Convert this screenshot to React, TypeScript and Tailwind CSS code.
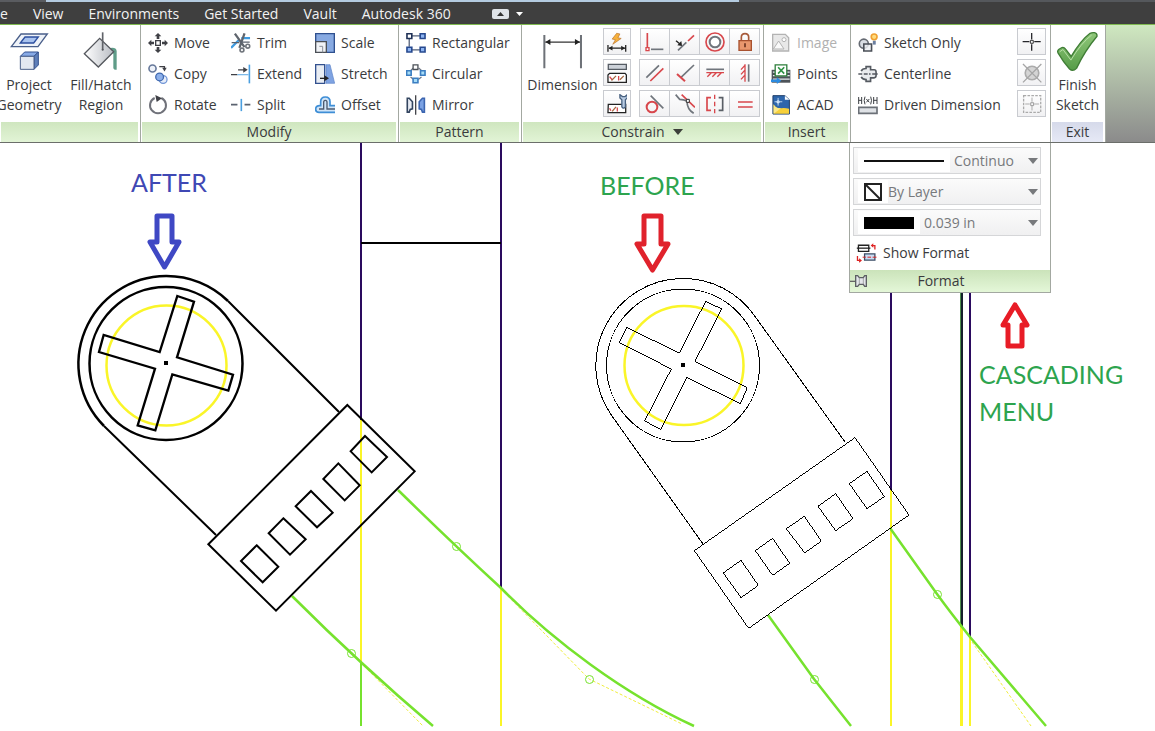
import type { ReactNode } from "react";

/* Icons are drawn on a grid three times finer than the screen. */
function Icon({ box, w = 20, h = 20, children }: { box: string; w?: number; h?: number; children: ReactNode }) {
  return (
    <svg aria-hidden="true" className="shrink-0" width={w} height={h} viewBox={box} fill="none">
      {children}
    </svg>
  );
}

const DARK = "#3f4046";
const BLUE = "#3f9be0";
const NAVY = "#33518f";
const RED = "#d8474c";
const GRAY = "#70757c";

const ProjectIcon = () => (
  <Icon box="24 86 120 120" w={40} h={40}>
    <path d="M31 133L60 95H139L111 133Z" fill="#eef2f8" stroke="#4a5f8a" strokeWidth="4" />
    <path d="M58 122L72 104H112L98 122Z" fill="#a9c3ef" stroke="#2d4f9f" strokeWidth="4" />
    <path d="M58 162L71 149H112L99 162Z" fill="#88aae6" stroke={NAVY} strokeWidth="3" />
    <path d="M99 162L112 149V188L99 201Z" fill="#5f7fb9" stroke={NAVY} strokeWidth="3" />
    <path d="M58 162H99V201H58Z" fill="#e3e8f1" stroke="#4a5f8a" strokeWidth="3" />
  </Icon>
);

const FillIcon = () => (
  <Icon box="244 86 120 120" w={40} h={40}>
    <defs>
      <linearGradient id="bucket" x1="0" x2="1">
        <stop offset="0" stopColor="#ffffff" />
        <stop offset="1" stopColor="#b9bdc4" />
      </linearGradient>
    </defs>
    <path d="M326 138Q349 132 351 146V202Q344 204 341 198V154Q338 146 326 150Z" fill="#5f9c88" />
    <path d="M254 154L300 108L342 148L296 194Z" fill="url(#bucket)" stroke="#55585e" strokeWidth="4" />
    <path d="M309 90V143" stroke="#606369" strokeWidth="5" />
    <circle cx="309" cy="142" r="3" fill="#55585e" />
  </Icon>
);

const MoveIcon = () => (
  <Icon box="444 96 60 60">
    <path d="M467 119H481V133H467Z" stroke={DARK} strokeWidth="4" />
    <path d="M474 96L484 106H478V114H470V106H464ZM474 156L464 146H470V138H478V146H484ZM444 126L454 116V122H462V130H454V136ZM504 126L494 136V130H486V122H494V116Z" fill={DARK} />
  </Icon>
);

const CopyIcon = () => (
  <Icon box="443 188 62 62">
    <circle cx="457" cy="202" r="11" fill="#eef2f9" stroke="#66789a" strokeWidth="5" />
    <circle cx="490" cy="236" r="12" fill="#e6edf9" stroke="#6f94d6" strokeWidth="4" />
    <circle cx="479" cy="228" r="12" fill="#8db0ea" stroke="#3f68ae" strokeWidth="4" />
    <path d="M478 196H494V202" stroke={DARK} strokeWidth="4" />
    <path d="M487 200H501L494 211Z" fill={DARK} />
  </Icon>
);

const RotateIcon = () => (
  <Icon box="442 282 60 60">
    <path d="M462 291A24 24 0 1 0 482 291" stroke="#70727a" strokeWidth="6" />
    <path d="M464 282L484 292L468 303Z" fill={DARK} />
  </Icon>
);

const TrimIcon = () => (
  <Icon box="34 96 62 62">
    <path d="M34 142L60 116M66 112H93" stroke={BLUE} strokeWidth="7" />
    <path d="M46 98L76 140M76 97L60 142" stroke="#5f656d" strokeWidth="7" />
    <path d="M64 124H92M36 126H60" stroke="#59616e" strokeWidth="4" />
    <circle cx="68" cy="149" r="6" stroke={GRAY} strokeWidth="5" />
    <circle cx="86" cy="137" r="6" stroke={GRAY} strokeWidth="5" />
  </Icon>
);

const ExtendIcon = () => (
  <Icon box="34 188 62 62">
    <path d="M34 221H54M56 206H76" stroke={DARK} strokeWidth="4" />
    <path d="M54 221H88" stroke="#7db9e8" strokeWidth="4" />
    <path d="M72 197L86 206L72 215Z" fill={DARK} />
    <path d="M91 190V248" stroke="#4b9fe0" strokeWidth="5" />
  </Icon>
);

const SplitIcon = () => (
  <Icon box="34 282 62 60">
    <path d="M34 311H54M76 311H94" stroke="#5b6370" strokeWidth="5" />
    <path d="M66 293V331" stroke="#4b9fe0" strokeWidth="5" />
  </Icon>
);

const ScaleIcon = () => (
  <Icon box="285 96 60 60">
    <path d="M287 98H343V154H287Z" fill="#88aae2" stroke="#2f508f" strokeWidth="4" />
    <path d="M287 122H319V154H287Z" fill="#f1f3f6" stroke="#4b5057" strokeWidth="4" />
    <path d="M298 136H308V154" stroke="#8a9098" strokeWidth="3" />
  </Icon>
);

const StretchIcon = () => (
  <Icon box="285 189 60 60">
    <path d="M287 191H314V247H287Z" fill="#e9edf3" stroke={NAVY} strokeWidth="4" />
    <path d="M318 191H330L344 247H318Z" fill="#7fa3e2" stroke="#5c83c8" strokeWidth="2" />
    <path d="M300 232H316" stroke="#222" strokeWidth="4" />
    <path d="M313 223L327 232L313 241Z" fill="#222" />
  </Icon>
);

const OffsetIcon = () => (
  <Icon box="286 284 60 56">
    <path d="M346 334H298Q288 334 288 325Q288 314 300 314H303V302Q303 288 317 288Q331 288 331 302V314H346" fill="#cfe4f8" stroke="#3e8ed6" strokeWidth="5" />
    <path d="M346 324H322V304Q322 298 317 298Q312 298 312 304V324H298" stroke="#4d5a6e" strokeWidth="4" />
  </Icon>
);

const RectangularIcon = () => (
  <Icon box="33 95 60 62">
    <path d="M50 104H76M50 147H76M42 112V138" stroke="#55627a" strokeWidth="4" />
    <path d="M35 97H50V112H35Z" fill="#fff" stroke="#1f3157" strokeWidth="5" />
    <path d="M76 97H91V112H76ZM35 139H50V154H35ZM76 139H91V154H76Z" fill="#8db4f2" stroke="#27498f" strokeWidth="5" />
  </Icon>
);

const CircularIcon = () => (
  <Icon box="32 188 62 62">
    <path d="M47 208L55 200M71 200L80 208M46 228L56 236M80 228L70 236" stroke="#6c7686" strokeWidth="4" />
    <path d="M54 191H69V205H54Z" fill="#fff" stroke="#4b5057" strokeWidth="4" />
    <path d="M34 209H48V223H34ZM77 209H91V223H77ZM54 232H69V246H54Z" fill="#a6dcf7" stroke="#3c7ec2" strokeWidth="5" />
  </Icon>
);

const MirrorIcon = () => (
  <Icon box="32 281 60 62">
    <path d="M35 291H41L51 302V324L44 326L41 334H35Z" fill="#e8ecf3" stroke="#33455f" strokeWidth="5" />
    <path d="M88 291H82L72 302V324L79 326L82 334H88Z" fill="#7ba2e4" stroke="#3c65b0" strokeWidth="5" />
    <path d="M61 282V342" stroke={DARK} strokeWidth="4" />
  </Icon>
);

const DimensionIcon = () => (
  <Icon box="442 94 122 104" w={41} h={35}>
    <path d="M449 97V196M558 97V196" stroke="#6e7278" strokeWidth="6" />
    <path d="M452 118H555" stroke="#333" strokeWidth="4" />
    <path d="M452 118L467 109V127ZM555 118L540 109V127Z" fill="#222" />
  </Icon>
);

const AutoDimIcon = () => (
  <Icon box="34 36 62 62">
    <path d="M64 40L50 58L60 60L52 74L78 56L68 54L74 42Z" fill="#f6b13c" stroke="#b8702a" strokeWidth="2" />
    <path d="M37 76V97M92 76V97M40 86H90" stroke="#222" strokeWidth="4" />
    <path d="M39 86L51 79V93ZM90 86L78 79V93Z" fill="#222" />
  </Icon>
);

const ShowConstraintsIcon = () => (
  <Icon box="34 128 62 62">
    <path d="M38 132H94V148H38Z" fill="#cdd2d9" stroke="#555b63" strokeWidth="4" />
    <path d="M42 160H90L94 165V188H37V165Z" fill="#fff" stroke="#222" strokeWidth="4" />
    <path d="M50 180L42 170M70 168V182" stroke={RED} strokeWidth="4" />
    <path d="M48 182L62 168M74 180L86 168" stroke="#a5653f" strokeWidth="4" />
  </Icon>
);

const SettingsIcon = () => (
  <Icon box="34 220 62 62">
    <path d="M38 252H92V278H37Z" fill="#fff" stroke="#222" strokeWidth="4" />
    <path d="M46 272L42 264M66 262V274" stroke={RED} strokeWidth="4" />
    <path d="M50 274L62 260" stroke="#a5653f" strokeWidth="4" />
    <path d="M74 222V232L80 238V260Q85 268 91 260V238L97 232V222L90 228H82Z" fill="#b8cbe2" stroke="#47607f" strokeWidth="4" />
  </Icon>
);

const CoincidentIcon = () => (
  <Icon box="148 34 60 60">
    <path d="M155 37V80" stroke={RED} strokeWidth="5" />
    <path d="M151 81H160V90H151Z" fill="#fff" stroke={RED} strokeWidth="4" />
    <path d="M166 86H203" stroke={GRAY} strokeWidth="5" />
  </Icon>
);

const CollinearIcon = () => (
  <Icon box="236 34 60 60">
    <path d="M245 89L270 65" stroke={GRAY} strokeWidth="5" />
    <path d="M275 61L293 44" stroke={RED} strokeWidth="5" />
    <path d="M239 60L252 71" stroke="#222" strokeWidth="4" />
    <path d="M257 76L243 74L255 61Z" fill="#222" />
  </Icon>
);

const ConcentricIcon = () => (
  <Icon box="327 35 60 60">
    <circle cx="357" cy="65" r="27" stroke={RED} strokeWidth="5" />
    <circle cx="357" cy="65" r="16" fill="#fff" stroke={GRAY} strokeWidth="6" />
  </Icon>
);

const LockIcon = () => (
  <Icon box="415 36 60 60">
    <path d="M434 62V52Q434 41 445 41Q456 41 456 52V62" stroke="#a75a3a" strokeWidth="5" />
    <path d="M427 62H464V91H427Z" fill="#e9976d" stroke="#a8512f" strokeWidth="4" />
    <path d="M445 70V82" stroke="#6b3420" strokeWidth="5" />
  </Icon>
);

const ParallelIcon = () => (
  <Icon box="148 130 60 60">
    <path d="M152 174L190 137" stroke={GRAY} strokeWidth="5" />
    <path d="M164 184L203 146" stroke={RED} strokeWidth="5" />
  </Icon>
);

const PerpendicularIcon = () => (
  <Icon box="236 130 60 60">
    <path d="M254 173L293 136" stroke={GRAY} strokeWidth="5" />
    <path d="M242 163L266 185" stroke={RED} strokeWidth="6" />
  </Icon>
);

const HorizontalIcon = () => (
  <Icon box="327 128 60 60">
    <path d="M331 147H384" stroke={GRAY} strokeWidth="5" />
    <path d="M331 157H384M346 157L334 169M361 157L349 169M376 157L364 169" stroke={RED} strokeWidth="4" />
  </Icon>
);

const VerticalIcon = () => (
  <Icon box="416 130 60 60">
    <path d="M457 134V186" stroke={GRAY} strokeWidth="5" />
    <path d="M446 134V186M445 138L434 150M445 152L434 164M445 167L434 179" stroke={RED} strokeWidth="4" />
  </Icon>
);

const TangentIcon = () => (
  <Icon box="148 220 60 60">
    <circle cx="169" cy="259" r="16" stroke={RED} strokeWidth="6" />
    <path d="M165 225L203 263" stroke={GRAY} strokeWidth="5" />
  </Icon>
);

const SmoothIcon = () => (
  <Icon box="236 222 60 60">
    <path d="M238 224L250 238Q262 238 272 243Q272 268 292 280" stroke={GRAY} strokeWidth="5" />
    <path d="M256 224L296 262" stroke={RED} strokeWidth="5" />
    <path d="M270 238H279V247H270Z" fill="#fff" stroke="#333" strokeWidth="3" />
  </Icon>
);

const SymmetricIcon = () => (
  <Icon box="326 222 60 60">
    <path d="M344 233H332V271H344" stroke={RED} strokeWidth="5" />
    <path d="M367 233H379V271H367" stroke="#5a5f66" strokeWidth="5" />
    <path d="M355 224V237M355 245V259M355 267V280" stroke={RED} strokeWidth="4" />
  </Icon>
);

const EqualIcon = () => (
  <Icon box="416 222 60 60">
    <path d="M425 246H469M425 261H469" stroke={RED} strokeWidth="5" />
  </Icon>
);

const ImageIcon = () => (
  <Icon box="33 34 56 60">
    <path d="M36 38H74L84 48V88H36Z" fill="#e8e8e8" stroke="#b3b3b3" strokeWidth="4" />
    <circle cx="70" cy="54" r="6" fill="#fff" stroke="#b3b3b3" strokeWidth="3" />
    <path d="M38 82L54 58L70 82Z" fill="#fafafa" stroke="#b3b3b3" strokeWidth="3" />
  </Icon>
);

const PointsIcon = () => (
  <Icon box="32 128 62 62">
    <path d="M34 146H92V186H34Z" fill="#4d5359" />
    <path d="M38 153H90M38 164H90M38 175H90" stroke="#e5e9ee" strokeWidth="4" />
    <path d="M45 131H81V165H45Z" fill="#fff" stroke="#2c7d3a" strokeWidth="4" />
    <path d="M54 138L73 158M73 138L54 158" stroke="#2f9344" strokeWidth="5" />
    <path d="M32 176H50V169L64 180L50 190V184H32Z" fill="#2c8be0" />
  </Icon>
);

const AcadIcon = () => (
  <Icon box="32 221 60 62">
    <path d="M37 223H74L88 236V280H37Z" fill="#2e66ac" stroke="#1b3a66" strokeWidth="3" />
    <path d="M39 250Q46 264 62 262Q74 260 87 264V279H39Z" fill="#f7d03a" />
    <path d="M39 279L62 262Q46 264 39 250Z" fill="#fbe88a" />
    <path d="M74 223L88 236H74Z" fill="#fff" />
    <circle cx="53" cy="242" r="5" fill="#fff" />
    <path d="M53 230V254M42 242H66" stroke="#bcd6f2" strokeWidth="3" />
  </Icon>
);

const SketchOnlyIcon = () => (
  <Icon box="293 34 60 62">
    <circle cx="310" cy="67" r="14" fill="#d9dde3" stroke="#666b73" strokeWidth="5" />
    <path d="M310 68H334V90H310Z" fill="#eceff3" fillOpacity=".8" stroke="#4a4f57" strokeWidth="5" />
    <circle cx="342" cy="46" r="9" fill="#ffdb7d" stroke="#f0a030" strokeWidth="5" />
    <path d="M338 58H347V70H338Z" fill="#6b7f9f" />
  </Icon>
);

const CenterlineIcon = () => (
  <Icon box="294 126 60 62">
    <path d="M303 148Q306 140 318 140V134H332V144H343Q349 144 349 151V162Q349 169 343 169H332V180H318V174Q306 174 303 166" fill="#e9ebee" stroke="#555a61" strokeWidth="5" />
    <path d="M294 157H306M311 157H323M327 157H332M337 157H354" stroke="#555a61" strokeWidth="4" />
  </Icon>
);

const DrivenIcon = () => (
  <Icon box="293 221 60 60">
    <path d="M295 227V248M304 227V248M295 237H304M340 227V248M350 227V248M340 237H350" stroke="#3c3f44" strokeWidth="3" />
    <path d="M314 226Q309 237 314 249M331 226Q336 237 331 249M318 233L327 243M327 233L318 243" stroke="#3c3f44" strokeWidth="3" />
    <path d="M295 258H350V276H295Z" fill="#dfe2e6" stroke="#6b7077" strokeWidth="5" />
  </Icon>
);

const CrossPointIcon = () => (
  <Icon box="242 94 60 62">
    <path d="M271 97V117M271 132V152M243 124H264M279 124H299" stroke="#26262b" strokeWidth="4" />
    <path d="M267 120H276V129H267Z" stroke="#333" strokeWidth="3" />
  </Icon>
);

const HoleIcon = () => (
  <Icon box="242 187 60 62">
    <circle cx="272" cy="218" r="21" fill="#d4d4d4" stroke="#ababab" strokeWidth="5" />
    <path d="M244 190L301 247M301 190L244 247" stroke="#a5a5a5" strokeWidth="4" />
  </Icon>
);

const GridPointIcon = () => (
  <Icon box="241 279 60 62">
    <path d="M245 284H298V336H245Z" stroke="#aaa" strokeWidth="4" strokeDasharray="8 4" />
    <path d="M271 290V303M271 316V330M250 310H264M278 310H293" stroke="#aaa" strokeWidth="3" />
    <path d="M267 306H276V315H267Z" stroke="#999" strokeWidth="3" />
  </Icon>
);

const CheckIcon = () => (
  <Icon box="350 90 128 124" w={43} h={41}>
    <defs>
      <linearGradient id="tick" x1="0" y1="0" x2="0" y2="1">
        <stop offset="0" stopColor="#8fc779" />
        <stop offset="1" stopColor="#569c48" />
      </linearGradient>
    </defs>
    <path d="M355 156Q352 150 358 145L367 140Q373 138 378 145L395 167Q424 118 452 97Q458 94 465 95Q474 97 473 106Q436 150 411 203Q400 214 390 205Q370 182 355 156Z" fill="url(#tick)" stroke="#3f7d35" strokeWidth="4" />
    <path d="M360 153L370 146L394 178Q425 126 457 102" stroke="#b7dfa6" strokeWidth="3" />
  </Icon>
);

const ShowFormatIcon = () => (
  <Icon box="34 308 64 62" w={21}>
    <path d="M41 315H73V334H41Z" stroke="#222" strokeWidth="4" />
    <path d="M36 324H78" stroke="#222" strokeWidth="4" />
    <path d="M60 342H92V361H60Z" fill="#c9ddf3" stroke="#3b4c66" strokeWidth="4" />
    <path d="M54 352H64M69 352H80M85 352H97" stroke="#d22" strokeWidth="3" />
    <path d="M92 328V316H86M38 348V362H44" stroke="#d22" strokeWidth="4" />
    <path d="M87 309V323L79 316ZM43 355V369L52 362Z" fill="#d22" />
  </Icon>
);

const PinIcon = () => (
  <Icon box="18 402 54 42" w={18} h={14}>
    <path d="M18 424H34" stroke="#666" strokeWidth="4" />
    <path d="M35 407H41L46 413H58L62 407H67V439H62L58 433H46L41 439H35Z" fill="#e3e6ea" stroke="#5c5f63" strokeWidth="4" />
    <path d="M46 413V433M58 413V433" stroke="#888" strokeWidth="2" />
  </Icon>
);

const Caret = ({ light = false }: { light?: boolean }) => (
  <svg aria-hidden="true" className="shrink-0" width="10" height="6" viewBox="0 0 10 6">
    <path d="M0 0H10L5 6Z" fill={light ? "#77797c" : "#3c3f3a"} />
  </svg>
);

function Tool({ icon, children, disabled }: { icon: ReactNode; children: ReactNode; disabled?: boolean }) {
  return (
    <button type="button" disabled={disabled} className="flex h-[31px] items-center gap-[6px] whitespace-nowrap text-left text-[#3a3b3d] disabled:text-[#b1b1b1]">
      {icon}
      <span>{children}</span>
    </button>
  );
}

function BigTool({ icon, children, className }: { icon: ReactNode; children: ReactNode; className: string }) {
  return (
    <button type="button" className={`flex shrink-0 flex-col items-center whitespace-nowrap text-center leading-5 text-[#3a3b3d] ${className}`}>
      <span className="flex h-12 items-center">{icon}</span>
      {children}
    </button>
  );
}

function Cell({ label, icon, className = "", disabled }: { label: string; icon: ReactNode; className?: string; disabled?: boolean }) {
  return (
    <button type="button" aria-label={label} disabled={disabled} className={`flex h-[27px] items-center justify-center border border-[#c9cbd0] bg-linear-to-b from-white to-[#f1f1f3] ${className}`}>
      {icon}
    </button>
  );
}

function Panel({ title, className, children, tone = "from-[#cfe6bf] to-[#e2f4d6]" }: { title: ReactNode; className: string; children: ReactNode; tone?: string }) {
  return (
    <section className={`flex shrink-0 flex-col border-r border-[#a3a8a1] bg-white ${className}`}>
      <div className="flex h-[97px] overflow-hidden pt-[2px]">{children}</div>
      <h2 className={`mr-[2px] ml-px flex h-5 items-center justify-center gap-[8px] bg-linear-to-b leading-5 ${tone}`}>{title}</h2>
    </section>
  );
}

function Field({ label, value, preview, gap }: { label: string; value: string; preview: ReactNode; gap: string }) {
  return (
    <div className={`flex h-[27px] items-center border border-[#d5d6d8] bg-linear-to-b from-[#fbfbfb] to-[#f0f0f1] pr-[2px] pl-1 ${gap}`}>
      <span className="flex h-[23px] items-center bg-white px-[6px]">{preview}</span>
      <select aria-label={label} className="min-w-0 flex-1 appearance-none bg-transparent text-[#77797c] outline-none">
        <option>{value}</option>
      </select>
      <Caret light />
    </div>
  );
}

function FormatMenu() {
  return (
    <div className="absolute top-full -left-[2px] z-10 mt-px w-[202px] border border-t-0 border-[#a3a8a1] bg-white">
      <div className="flex flex-col gap-1 pt-1 pr-[9px] pl-[3px]">
        <Field gap="gap-1" label="Line type" value="Continuo" preview={<svg width="80" height="2"><path d="M0 1H80" stroke="#111" strokeWidth="2" /></svg>} />
        <Field gap="gap-0" label="Line color" value="By Layer" preview={<svg width="18" height="18" fill="none" stroke="#222" strokeWidth="2"><path d="M1 1H17V17H1Z" /><path d="M1 1L17 17" /></svg>} />
        <Field gap="gap-1" label="Line weight" value="0.039 in" preview={<svg width="50" height="12"><rect width="50" height="12" fill="#000" /></svg>} />
      </div>
      <div className="flex h-[34px] items-center pl-[6px]">
        <Tool icon={<ShowFormatIcon />}>Show Format</Tool>
      </div>
      <div className="grid h-[22px] grid-cols-[18px_1fr_36px] items-center bg-linear-to-b from-[#cbe3ba] to-[#e4f7d8]">
        <PinIcon />
        <span className="text-center text-[#3a3b3d]">Format</span>
      </div>
    </div>
  );
}

const constraints: [string, ReactNode][] = [
  ["Coincident", <CoincidentIcon />],
  ["Collinear", <CollinearIcon />],
  ["Concentric", <ConcentricIcon />],
  ["Fix", <LockIcon />],
  ["Parallel", <ParallelIcon />],
  ["Perpendicular", <PerpendicularIcon />],
  ["Horizontal", <HorizontalIcon />],
  ["Vertical", <VerticalIcon />],
  ["Tangent", <TangentIcon />],
  ["Smooth", <SmoothIcon />],
  ["Symmetric", <SymmetricIcon />],
  ["Equal", <EqualIcon />],
];

function Ribbon() {
  return (
    <div className="flex h-[118px] border-b border-[#6b6e6a] bg-linear-to-b from-[#cfe8c0] to-[#8b8b8b] text-[#3a3b3d]">
      <Panel title="" className="w-[141px]">
        <div className="flex w-full justify-end gap-[2px] pr-[3px]">
          <BigTool className="w-[68px]" icon={<ProjectIcon />}>Project<br />Geometry</BigTool>
          <BigTool className="w-[72px]" icon={<FillIcon />}>Fill/Hatch<br />Region</BigTool>
        </div>
      </Panel>
      <Panel title="Modify" className="w-[258px]">
        <div className="grid grid-cols-[83px_84px_84px] content-start pl-[7px]">
          <Tool icon={<MoveIcon />}>Move</Tool>
          <Tool icon={<TrimIcon />}>Trim</Tool>
          <Tool icon={<ScaleIcon />}>Scale</Tool>
          <Tool icon={<CopyIcon />}>Copy</Tool>
          <Tool icon={<ExtendIcon />}>Extend</Tool>
          <Tool icon={<StretchIcon />}>Stretch</Tool>
          <Tool icon={<RotateIcon />}>Rotate</Tool>
          <Tool icon={<SplitIcon />}>Split</Tool>
          <Tool icon={<OffsetIcon />}>Offset</Tool>
        </div>
      </Panel>
      <Panel title="Pattern" className="w-[123px]">
        <div className="flex flex-col pl-[7px]">
          <Tool icon={<RectangularIcon />}>Rectangular</Tool>
          <Tool icon={<CircularIcon />}>Circular</Tool>
          <Tool icon={<MirrorIcon />}>Mirror</Tool>
        </div>
      </Panel>
      <Panel title={<>Constrain <Caret /></>} className="w-[242px]">
        <BigTool className="w-[81px]" icon={<DimensionIcon />}>Dimension</BigTool>
        <div className="flex flex-col gap-1 pt-px">
          <Cell label="Automatic dimensions" className="w-7" icon={<AutoDimIcon />} />
          <Cell label="Show constraints" className="w-7" icon={<ShowConstraintsIcon />} />
          <Cell label="Constraint settings" className="w-7" icon={<SettingsIcon />} />
        </div>
        <div className="ml-[9px] grid grid-cols-[30px_30px_30px_30px] content-start gap-y-1 pt-px">
          {constraints.map(([label, icon]) => (
            <Cell key={label} label={label} icon={icon} className="-ml-px first:ml-0" />
          ))}
        </div>
      </Panel>
      <Panel title="Insert" className="w-[87px]">
        <div className="flex flex-col pl-[7px]">
          <Tool disabled icon={<ImageIcon />}>Image</Tool>
          <Tool icon={<PointsIcon />}>Points</Tool>
          <Tool icon={<AcadIcon />}>ACAD</Tool>
        </div>
      </Panel>
      <section className="relative flex w-[200px] shrink-0 justify-between border-r border-[#a3a8a1] bg-white pt-[2px] pr-1 pl-[7px]">
        <div className="flex flex-col">
          <Tool icon={<SketchOnlyIcon />}>Sketch Only</Tool>
          <Tool icon={<CenterlineIcon />}>Centerline</Tool>
          <Tool icon={<DrivenIcon />}>Driven Dimension</Tool>
        </div>
        <div className="flex flex-col gap-1 pt-px">
          <Cell label="Center point" className="w-[29px]" icon={<CrossPointIcon />} />
          <Cell label="Hole center" disabled className="w-[29px]" icon={<HoleIcon />} />
          <Cell label="Grid point" disabled className="w-[29px]" icon={<GridPointIcon />} />
        </div>
        <FormatMenu />
      </section>
      <Panel title="Exit" className="w-[55px]" tone="from-[#d6daea] to-[#e6e9f6]">
        <BigTool className="w-[53px]" icon={<CheckIcon />}>Finish<br />Sketch</BigTool>
      </Panel>
    </div>
  );
}

function MenuBar() {
  return (
    <header>
      <div className="flex h-[2px] bg-[#55585c]">
        <div className="w-[4%] bg-[#5a5c60]" />
        <div className="w-[60%] bg-[#b4cbe0]" />
      </div>
      <nav className="flex h-[23px] items-center gap-[25px] border-b border-[#7fb950] bg-[#3f3f3f] pt-px text-[#f2f2f2]">
        <a href="#sketch">e</a>
        <a href="#view">View</a>
        <a href="#environments">Environments</a>
        <a href="#start">Get Started</a>
        <a href="#vault">Vault</a>
        <a href="#a360">Autodesk 360</a>
        <button type="button" aria-label="Ribbon display" className="ml-[16px] flex items-center gap-[7px]">
          <svg width="17" height="10" viewBox="0 0 17 10"><rect width="17" height="10" rx="2" fill="#dfe3e8" /><path d="M5 7H12L8.500 3Z" fill="#333" /></svg>
          <svg width="7" height="4" viewBox="0 0 7 4"><path d="M0 0H7L3.500 4Z" fill="#fff" /></svg>
        </button>
      </nav>
    </header>
  );
}

/* Part outlines are stored at triple scale. */
const afterBody = "M472 45L674 244L258 662L55 463ZM525 138L591 201L545 247L482 184ZM445 220L509 286L464 331L400 267ZM363 303L428 368L381 412L317 349ZM280 385L347 448L300 494L236 430ZM200 466L265 530L218 577L153 513Z";
const afterCross = "M352 438L402 455L351 622L519 674L505 722L337 673L286 841L233 826L285 656L117 606L131 555L299 606Z";
const beforeBody = "M525 53L687 285L206 625L43 392ZM561 154L613 230L561 266L508 191ZM467 221L519 296L467 332L414 259ZM373 289L424 363L374 399L319 326ZM278 355L329 430L278 466L226 392ZM183 421L235 496L183 533L130 459Z";
const beforeCross = "M377 454L425 477L345 634L502 713L481 761L320 682L242 838L194 813L274 657L118 578L141 532L298 610Z";

function Drawing() {
  return (
    <svg className="block" width="1155" height="588" viewBox="0 143 1155 588" fill="none" role="img" aria-label="Sketch before and after formatting">
      <g stroke="#faf528" strokeWidth="2">
        <path d="M361 420V663M501 588V726M891 490V726M970 637V726" />
        <path d="M961.500 627V726" strokeWidth="3" />
        <circle cx="166.500" cy="365.500" r="60" strokeWidth="2.500" />
        <circle cx="684" cy="365.500" r="59.500" strokeWidth="2.500" />
      </g>
      <g stroke="#f0ee3c" strokeWidth="1" strokeDasharray="3 2">
        <path d="M501 589L589 679L682 724M364 666L423 726M972 642L1031 726" />
      </g>
      <g stroke="#2a0a5e" strokeWidth="2">
        <path d="M361 143V420M501 143V588M891 143V490M970 143V637" />
        <path d="M962 143V627" stroke="#14202a" />
        <path d="M960.500 143V627" stroke="#4c8c4c" strokeWidth="1" />
      </g>
      <path d="M361 243H501" stroke="#000" strokeWidth="2" />
      <g stroke="#76e22e" strokeWidth="2.500">
        <path d="M361 663V726" strokeWidth="2" />
        <path d="M398 490Q452 543 501 588C552 640 624 694 694 726" />
        <path d="M292 596Q360 664 433 726" />
        <path d="M890 528L937 594Q950 612 970 637L1046 726" />
        <path d="M768 615L814 679L851 726" />
        <g strokeWidth="1">
          <circle cx="456.500" cy="546.500" r="4" />
          <circle cx="351.500" cy="653.500" r="4" />
          <circle cx="589.500" cy="679.500" r="4" />
          <circle cx="937.500" cy="594.500" r="4" />
          <circle cx="814.500" cy="679.500" r="4" />
        </g>
      </g>
      <g stroke="#000">
        <path d="M216 535L104 426M228 301L339 412" strokeWidth="2" />
        <path d="M104 426A88 88 0 0 1 166 276A88 88 0 0 1 228 301" strokeWidth="2.500" />
        <circle cx="166" cy="363.500" r="76.500" strokeWidth="2.500" />
        <g transform="translate(60 150) scale(.33333)">
          <path d={afterCross} strokeWidth="7" />
        </g>
        <g transform="translate(190 390) scale(.33333)">
          <path d={afterBody} strokeWidth="6" />
        </g>
        <g shapeRendering="crispEdges">
          <path d="M703 544L612 416A87 87 0 0 1 683 278.500A87 87 0 0 1 754 315L845 442" />
          <circle cx="683" cy="365.500" r="76.500" />
          <g transform="translate(580 150) scale(.33333)">
            <path d={beforeCross} strokeWidth="3" />
          </g>
          <g transform="translate(680 420) scale(.33333)">
            <path d={beforeBody} strokeWidth="3" />
          </g>
        </g>
      </g>
      <path d="M164 361H168V365H164ZM681 363H685V367H681Z" fill="#000" />
      <g strokeWidth="5" strokeLinejoin="round">
        <path d="M157 216H172V242H179L164.500 267L150 242H157Z" stroke="#3f48c4" />
        <path d="M644 216H661V244H668L652.500 270L637 244H644Z" stroke="#e0222c" />
        <path d="M1015 305L1027 325H1022V346H1008V325H1003Z" stroke="#e81c26" />
      </g>
    </svg>
  );
}

export default function App() {
  return (
    <div className="min-h-screen overflow-hidden bg-white font-['Open_Sans','Noto_Sans',sans-serif] text-[14px] leading-5">
      <MenuBar />
      <Ribbon />
      <main className="relative overflow-hidden font-['Lato',sans-serif] text-[25px] leading-[37px]">
        <Drawing />
        <p className="absolute top-[21px] left-[131px] text-[#3f48b4]">AFTER</p>
        <p className="absolute top-[24px] left-[600px] text-[#2da44e]">BEFORE</p>
        <p className="absolute top-[213px] left-[979px] text-[#2da44e]">CASCADING<br />MENU</p>
      </main>
    </div>
  );
}
